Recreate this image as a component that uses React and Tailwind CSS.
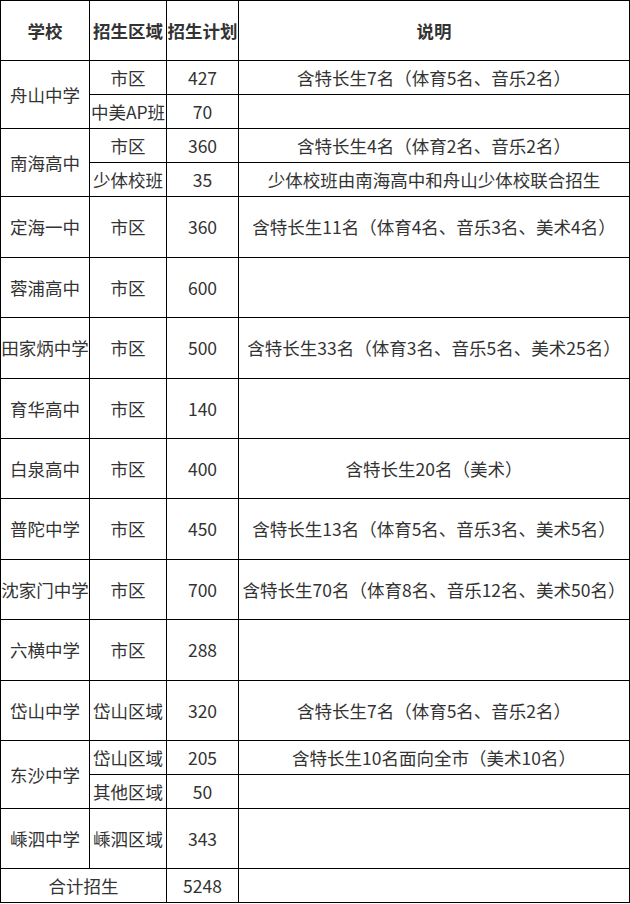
import React from "react";

// 招生计划表
const Cell = ({ className = "", children }) => (
  <div
    className={
      "bg-white flex items-center justify-center whitespace-nowrap overflow-visible " +
      className
    }
  >
    {children}
  </div>
);

const App = () => {
  return (
    <div
      className="w-[630px] bg-white text-[#333] text-[17.5px] leading-none"
      style={{ fontFamily: '"Microsoft YaHei", "Noto Sans CJK SC", "Noto Sans", sans-serif' }}
    >
      <div className="grid bg-black gap-px p-px grid-cols-[88px_76px_71px_390px] grid-rows-[59px_33px_33px_33px_33px_60px_59px_60px_59px_59px_60px_59px_60px_59px_33px_33px_59px_33px]">
        {/* header */}
        <Cell className="font-bold">学校</Cell>
        <Cell className="font-bold">招生区域</Cell>
        <Cell className="font-bold">招生计划</Cell>
        <Cell className="font-bold">说明</Cell>

        {/* 舟山中学 */}
        <Cell className="row-span-2">舟山中学</Cell>
        <Cell>市区</Cell>
        <Cell>427</Cell>
        <Cell>含特长生7名（体育5名、音乐2名）</Cell>
        <Cell>中美AP班</Cell>
        <Cell>70</Cell>
        <Cell></Cell>

        {/* 南海高中 */}
        <Cell className="row-span-2">南海高中</Cell>
        <Cell>市区</Cell>
        <Cell>360</Cell>
        <Cell>含特长生4名（体育2名、音乐2名）</Cell>
        <Cell>少体校班</Cell>
        <Cell>35</Cell>
        <Cell>少体校班由南海高中和舟山少体校联合招生</Cell>

        <Cell>定海一中</Cell>
        <Cell>市区</Cell>
        <Cell>360</Cell>
        <Cell>含特长生11名（体育4名、音乐3名、美术4名）</Cell>

        <Cell>蓉浦高中</Cell>
        <Cell>市区</Cell>
        <Cell>600</Cell>
        <Cell></Cell>

        <Cell>田家炳中学</Cell>
        <Cell>市区</Cell>
        <Cell>500</Cell>
        <Cell>含特长生33名（体育3名、音乐5名、美术25名）</Cell>

        <Cell>育华高中</Cell>
        <Cell>市区</Cell>
        <Cell>140</Cell>
        <Cell></Cell>

        <Cell>白泉高中</Cell>
        <Cell>市区</Cell>
        <Cell>400</Cell>
        <Cell>含特长生20名（美术）</Cell>

        <Cell>普陀中学</Cell>
        <Cell>市区</Cell>
        <Cell>450</Cell>
        <Cell>含特长生13名（体育5名、音乐3名、美术5名）</Cell>

        <Cell>沈家门中学</Cell>
        <Cell>市区</Cell>
        <Cell>700</Cell>
        <Cell>含特长生70名（体育8名、音乐12名、美术50名）</Cell>

        <Cell>六横中学</Cell>
        <Cell>市区</Cell>
        <Cell>288</Cell>
        <Cell></Cell>

        <Cell>岱山中学</Cell>
        <Cell>岱山区域</Cell>
        <Cell>320</Cell>
        <Cell>含特长生7名（体育5名、音乐2名）</Cell>

        {/* 东沙中学 */}
        <Cell className="row-span-2">东沙中学</Cell>
        <Cell>岱山区域</Cell>
        <Cell>205</Cell>
        <Cell>含特长生10名面向全市（美术10名）</Cell>
        <Cell>其他区域</Cell>
        <Cell>50</Cell>
        <Cell></Cell>

        <Cell>嵊泗中学</Cell>
        <Cell>嵊泗区域</Cell>
        <Cell>343</Cell>
        <Cell></Cell>

        <Cell className="col-span-2">合计招生</Cell>
        <Cell>5248</Cell>
        <Cell></Cell>
      </div>
    </div>
  );
};

export default App;
